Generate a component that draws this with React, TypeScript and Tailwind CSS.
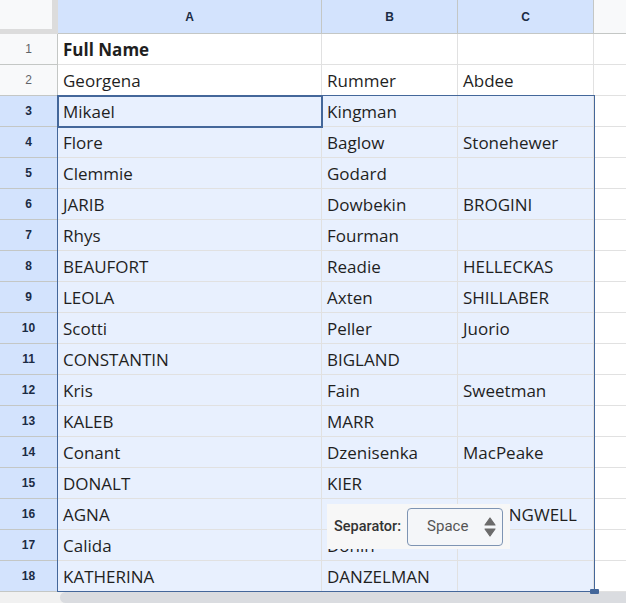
import React from "react";

type Row = [string, string, string];

const rows: Row[] = [
  ["Full Name", "", ""],
  ["Georgena", "Rummer", "Abdee"],
  ["Mikael", "Kingman", ""],
  ["Flore", "Baglow", "Stonehewer"],
  ["Clemmie", "Godard", ""],
  ["JARIB", "Dowbekin", "BROGINI"],
  ["Rhys", "Fourman", ""],
  ["BEAUFORT", "Readie", "HELLECKAS"],
  ["LEOLA", "Axten", "SHILLABER"],
  ["Scotti", "Peller", "Juorio"],
  ["CONSTANTIN", "BIGLAND", ""],
  ["Kris", "Fain", "Sweetman"],
  ["KALEB", "MARR", ""],
  ["Conant", "Dzenisenka", "MacPeake"],
  ["DONALT", "KIER", ""],
  ["AGNA", "", "HALLINGWELL"],
  ["Calida", "Donin", ""],
  ["KATHERINA", "DANZELMAN", ""],
];

const grid = "grid grid-cols-[58px_264px_136px_136px_1fr]";

function SortArrows() {
  return (
    <svg width="12" height="22" viewBox="0 0 12 22" className="shrink-0">
      <path d="M6 2 L11 9 L1 9 Z" fill="#6b6b6b" strokeLinejoin="round" stroke="#6b6b6b" strokeWidth="1.2" />
      <path d="M6 20 L11 13 L1 13 Z" fill="#6b6b6b" strokeLinejoin="round" stroke="#6b6b6b" strokeWidth="1.2" />
    </svg>
  );
}

export default function App() {
  return (
    <div className="relative w-[626px] h-[603px] overflow-hidden bg-white font-['Open_Sans',sans-serif] text-[#1f1f1f]">
      {/* column headers */}
      <div className={`${grid} h-[34px] font-['Liberation_Sans',Arial,sans-serif] text-[12px] font-bold`}>
        <div className="bg-[#f8f9fa] border-r-[6px] border-b-[5px] border-[#dcdcdc]" />
        {["A", "B", "C"].map((c) => (
          <div
            key={c}
            className="flex items-center justify-center bg-[#d3e3fd] text-[#1b2b44] border-r border-b border-[#c4c7c5]"
          >
            {c}
          </div>
        ))}
        <div className="bg-[#f8f9fa] border-b border-[#c4c7c5]" />
      </div>

      {/* rows */}
      {rows.map((r, i) => {
        const sel = i >= 2;
        return (
          <div key={i} className={`${grid} h-[31px]`}>
            <div
              className={`flex items-center justify-center font-['Liberation_Sans',Arial,sans-serif] text-[12px] border-r border-b border-[#c4c7c5] ${
                sel ? "bg-[#d3e3fd] text-[#1b2b44] font-bold" : "bg-[#f8f9fa] text-[#5f6368]"
              }`}
            >
              {i + 1}
            </div>
            {r.map((v, j) => (
              <div
                key={j}
                className={`flex items-center pt-[2px] pl-[5px] text-[17px] whitespace-nowrap overflow-visible border-r border-b border-[#e1e1e1] ${
                  sel ? "bg-[#e8f0fe]" : "bg-white"
                } ${i === 0 ? "font-bold" : ""}`}
              >
                {v}
              </div>
            ))}
            <div className="bg-white border-b border-[#e1e1e1]" />
          </div>
        );
      })}

      {/* scrollbar */}
      <div className="flex h-[11px] bg-[#f1f1f1] pl-[60px]">
        <div className="flex-1 rounded-l-full bg-[#dadce0]" />
      </div>

      {/* selection outline */}
      <div className="absolute left-[57px] top-[95px] w-[538px] h-[497px] border border-[#44679a] pointer-events-none" />
      {/* active cell */}
      <div className="absolute left-[57px] top-[95px] w-[266px] h-[33px] border-2 border-[#44679a] pointer-events-none" />
      {/* fill handle */}
      <div className="absolute left-[590px] top-[589px] w-[9px] h-[5px] bg-[#44679a] rounded-[1px]" />

      {/* separator popup */}
      <div className="absolute left-[327px] top-[504px] w-[183px] h-[45px] flex items-center gap-[6px] pl-[7px] bg-[#f7f7f7] font-['Roboto',sans-serif]">
        <span className="text-[14.5px] font-medium text-[#333]">Separator:</span>
        <div className="flex items-center justify-between w-[96px] h-[38px] rounded-[4px] border border-[#7e94b3] bg-[#f4f6f9] pl-[19px] pr-[6px]">
          <span className="text-[15px] text-[#555]">Space</span>
          <SortArrows />
        </div>
      </div>
    </div>
  );
}
